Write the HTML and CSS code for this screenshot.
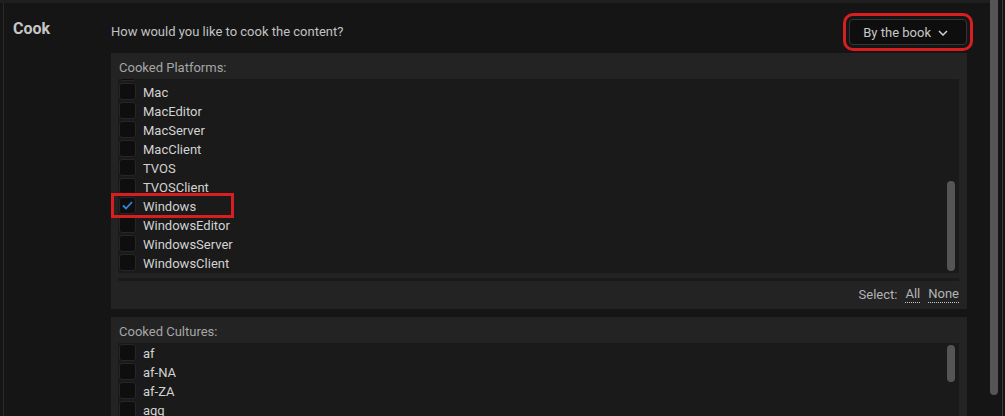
FILE: index.html
```html
<!DOCTYPE html>
<html>
<head>
<meta charset="utf-8">
<link rel="stylesheet" href="styles.css">
</head>
<body>
<div class="page">
  <div class="main">
    <div class="topstrip"></div>
    <div class="section">
      <div class="label">Cook</div>
      <div class="content">
        <div class="header">
          <span class="question">How would you like to cook the content?</span>
          <button class="dropdown">By the book
            <svg class="chev" width="10" height="6" viewBox="0 0 10 6"><path d="M1 1 L5 5 L9 1" fill="none" stroke="#cfcfcf" stroke-width="1.5"/></svg>
          </button>
        </div>

        <div class="panel">
          <div class="panel-title">Cooked Platforms:</div>
          <div class="list list-platforms">
            <div class="rows rows-scrolled">
              <div class="row"><span class="cb"></span></div>
              <div class="row"><span class="cb"></span><span class="name">Mac</span></div>
              <div class="row"><span class="cb"></span><span class="name">MacEditor</span></div>
              <div class="row"><span class="cb"></span><span class="name">MacServer</span></div>
              <div class="row"><span class="cb"></span><span class="name">MacClient</span></div>
              <div class="row"><span class="cb"></span><span class="name">TVOS</span></div>
              <div class="row"><span class="cb"></span><span class="name">TVOSClient</span></div>
              <div class="row row-marked"><span class="cb checked"><svg width="11" height="9" viewBox="0 0 11 9"><path d="M1 4.5 L4 7.5 L10 1" fill="none" stroke="#2f85e0" stroke-width="1.8"/></svg></span><span class="name">Windows</span></div>
              <div class="row"><span class="cb"></span><span class="name">WindowsEditor</span></div>
              <div class="row"><span class="cb"></span><span class="name">WindowsServer</span></div>
              <div class="row"><span class="cb"></span><span class="name">WindowsClient</span></div>
            </div>
            <div class="thumb thumb-platforms"></div>
          </div>
          <div class="hbar"></div>
          <div class="select-row">
            <span>Select:</span>
            <span class="link">All</span>
            <span class="link">None</span>
          </div>
        </div>

        <div class="panel panel-cultures">
          <div class="panel-title">Cooked Cultures:</div>
          <div class="list list-cultures">
            <div class="rows">
              <div class="row"><span class="cb"></span><span class="name">af</span></div>
              <div class="row"><span class="cb"></span><span class="name">af-NA</span></div>
              <div class="row"><span class="cb"></span><span class="name">af-ZA</span></div>
              <div class="row"><span class="cb"></span><span class="name">agq</span></div>
            </div>
            <div class="thumb thumb-cultures"></div>
          </div>
        </div>
      </div>
    </div>
  </div>
  <div class="vscroll"></div>
  <div class="sepline"></div>
</div>
</body>
</html>
```

FILE: styles.css
```css
* { box-sizing: border-box; }
html, body {
  margin: 0;
  padding: 0;
  background: #151515;
  height: 416px;
  overflow: hidden;
  font-family: Roboto, "Liberation Sans", sans-serif;
}
.page {
  display: flex;
  height: 416px;
  overflow: hidden;
}
.main {
  width: 990px;
  flex-shrink: 0;
  display: flex;
  flex-direction: column;
  overflow: hidden;
}
.topstrip {
  height: 3px;
  flex-shrink: 0;
  background: #1f1f1f;
}
.section {
  display: flex;
  flex-shrink: 0;
  min-height: 413px;
}
.label {
  margin-left: 3px;
  width: 108px;
  flex-shrink: 0;
  border-left: 1px solid #2a2a2a;
  padding-left: 9px;
  padding-top: 16px;
  font-size: 16px;
  font-weight: 700;
  color: #c6c6c6;
  line-height: 19px;
}
.content {
  width: 856px;
  flex-shrink: 0;
  display: flex;
  flex-direction: column;
}
.header {
  display: flex;
  flex-shrink: 0;
  justify-content: space-between;
  align-items: center;
  padding-top: 16px;
  padding-bottom: 8px;
}
.question {
  font-size: 13px;
  color: #c2c2c2;
  margin-top: -2px;
}
.dropdown {
  height: 26px;
  display: flex;
  align-items: center;
  padding: 0 18px 0 13px;
  background: #0e0e0e;
  border: 1px solid #353535;
  border-radius: 4px;
  color: #c8c8c8;
  font-family: Roboto, "Liberation Sans", sans-serif;
  font-size: 13px;
  outline: 3px solid #d81e1e;
  outline-offset: 3px;
}
.chev {
  margin-left: 7px;
  margin-top: 1px;
}
.panel {
  background: #232323;
  display: flex;
  flex-direction: column;
  flex-shrink: 0;
  height: 256px;
}
.panel-cultures {
  margin-top: 8px;
  height: 140px;
}
.panel-title {
  height: 26px;
  flex-shrink: 0;
  padding-left: 8px;
  padding-top: 7px;
  font-size: 13px;
  line-height: 16px;
  color: #a6a6a6;
}
.list {
  position: relative;
  margin: 0 8px 0 7px;
  background: #1a1a1a;
  flex-shrink: 0;
}
.list-platforms {
  height: 194px;
  clip-path: inset(0 -20px 0 -20px);
}
.list-cultures {
  flex: 1;
  overflow: hidden;
}
.rows-scrolled {
  margin-top: -16px;
}
.row {
  height: 19px;
  display: flex;
  align-items: center;
  padding-left: 1px;
}
.cb {
  width: 17px;
  height: 17px;
  background: #0e0e0e;
  border: 1px solid #262626;
  border-radius: 3px;
  display: flex;
  align-items: center;
  justify-content: center;
  flex-shrink: 0;
}
.name {
  margin-left: 7px;
  font-size: 13px;
  color: #d2d2d2;
  padding-top: 1px;
}
.row-marked {
  outline: 3px solid #d81e1e;
  outline-offset: 0;
  width: 117px;
  margin-left: -4px;
  padding-left: 5px;
  position: relative;
  z-index: 1;
}
.thumb {
  position: absolute;
  right: 4px;
  width: 8px;
  border-radius: 4px;
  background: #555555;
}
.thumb-platforms {
  top: 102px;
  height: 90px;
}
.thumb-cultures {
  top: 2px;
  height: 37px;
}
.hbar {
  margin: 5px 8px 0 7px;
  height: 3px;
  flex-shrink: 0;
  background: #1a1a1a;
}
.select-row {
  display: flex;
  justify-content: flex-end;
  gap: 8px;
  padding-right: 8px;
  padding-top: 6px;
  font-size: 13px;
  color: #b4b4b4;
  line-height: 16px;
}
.link {
  border-bottom: 1px dotted #c8c8c8;
  line-height: 14px;
}
.vscroll {
  width: 8px;
  height: 395px;
  flex-shrink: 0;
  background: #555555;
  border-radius: 0 0 4px 4px;
}
.sepline {
  margin-left: 4px;
  width: 1px;
  height: 416px;
  flex-shrink: 0;
  background: #3c3c3c;
}
```
